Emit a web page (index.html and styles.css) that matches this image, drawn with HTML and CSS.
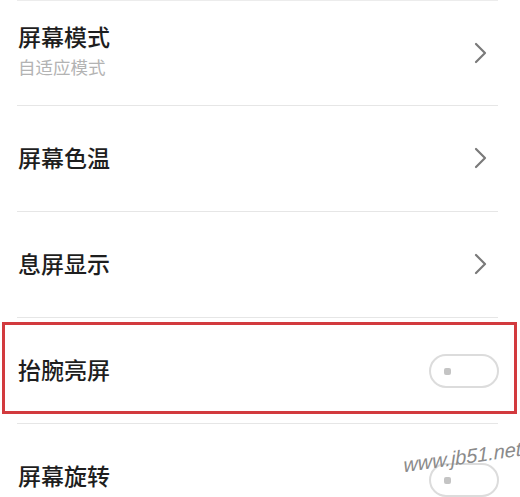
FILE: index.html
```html
<!DOCTYPE html>
<html lang="zh-CN">
<head>
<meta charset="utf-8">
<title>显示设置</title>
<link rel="stylesheet" href="styles.css">
</head>
<body>
<div class="list">
  <div class="row">
    <div class="text">
      <div class="title">屏幕模式</div>
      <div class="sub">自适应模式</div>
    </div>
    <svg class="chev" width="14" height="22" viewBox="0 0 14 22"><path d="M2 2 L11 11 L2 20" fill="none" stroke="#7a7a7a" stroke-width="2.2" stroke-linecap="round" stroke-linejoin="round"/></svg>
  </div>
  <div class="row">
    <div class="text"><div class="title">屏幕色温</div></div>
    <svg class="chev" width="14" height="22" viewBox="0 0 14 22"><path d="M2 2 L11 11 L2 20" fill="none" stroke="#7a7a7a" stroke-width="2.2" stroke-linecap="round" stroke-linejoin="round"/></svg>
  </div>
  <div class="row">
    <div class="text"><div class="title">息屏显示</div></div>
    <svg class="chev" width="14" height="22" viewBox="0 0 14 22"><path d="M2 2 L11 11 L2 20" fill="none" stroke="#7a7a7a" stroke-width="2.2" stroke-linecap="round" stroke-linejoin="round"/></svg>
  </div>
  <div class="row highlight">
    <div class="text"><div class="title">抬腕亮屏</div></div>
    <div class="toggle"><span class="dot"></span></div>
  </div>
  <div class="row last">
    <div class="text"><div class="title">屏幕旋转</div></div>
    <div class="toggle"><span class="dot"></span></div>
    <div class="watermark">www.jb51.net</div>
  </div>
</div>
</body>
</html>
```
FILE: styles.css
```css
html, body {
  margin: 0;
  padding: 0;
  background: #fff;
  overflow: hidden;
}
body {
  width: 520px;
  height: 497px;
  font-family: "Noto Sans CJK SC", "Noto Sans", sans-serif;
}
.list {
  padding: 0 22px 0 17px;
}
.list::before {
  content: "";
  display: block;
  height: 1px;
  background: #ececec;
}
.row {
  position: relative;
  height: 104px;
  display: flex;
  align-items: center;
  justify-content: space-between;
  border-bottom: 1px solid #e6e6e6;
}
.row + .row {
  height: 105px;
}
.row.last {
  height: 72px;
  border-bottom: 0;
  align-items: flex-start;
  padding-top: 40px;
}
.text {
  display: flex;
  flex-direction: column;
  margin-bottom: 4px;
}
.row.last .text {
  margin-top: -2px;
}
.title {
  font-size: 23px;
  line-height: 26px;
  font-weight: 500;
  color: #1e1e1e;
  padding-left: 1px;
}
.sub {
  font-size: 17.5px;
  line-height: 22px;
  color: #b3b3b3;
  margin-top: 7px;
  padding-left: 1px;
}
.row:first-child .text {
  margin-top: -2px;
}
.chev {
  margin-right: 10px;
  margin-top: -1px;
}
.toggle {
  width: 66px;
  height: 30px;
  border: 2px solid #dcdcdc;
  border-radius: 17px;
  display: flex;
  align-items: center;
  margin-right: -1px;
  margin-top: 1px;
}
.dot {
  width: 7px;
  height: 7px;
  border-radius: 2px;
  background: #c4c4c4;
  margin-left: 13px;
}
.row.last .toggle {
  margin-top: -1px;
}
.highlight::after {
  content: "";
  position: absolute;
  left: -15px;
  right: -19px;
  top: 4px;
  bottom: 9px;
  border: 3px solid #d23a3e;
  pointer-events: none;
}
.watermark {
  position: absolute;
  right: -24px;
  top: 22px;
  font-family: "Liberation Sans", sans-serif;
  font-style: italic;
  font-size: 20px;
  color: #8a8a8a;
  transform: rotate(-8deg) skewX(-6deg);
  transform-origin: center;
}
```
